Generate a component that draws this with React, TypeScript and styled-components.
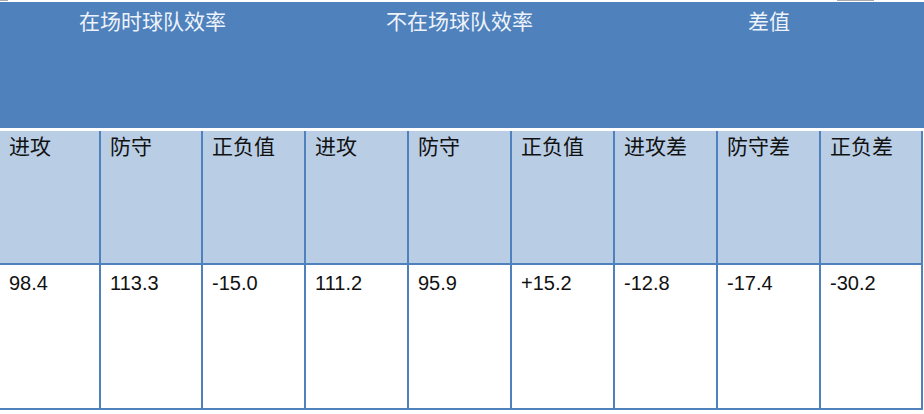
import React from 'react';
import styled, { createGlobalStyle } from 'styled-components';

const GlobalStyle = createGlobalStyle`
  html, body {
    margin: 0;
    padding: 0;
    background: #ffffff;
  }
  body {
    font-family: "Liberation Sans", Arial, sans-serif;
  }
`;

const Page = styled.div`
  width: 924px;
  height: 414px;
  overflow: hidden;
  background: #ffffff;
`;

const TopStrip = styled.div`
  height: 2px;
  display: flex;
  align-items: flex-start;
`;

const Mark = styled.span<{ $offset: number; $width: number }>`
  display: block;
  margin-left: ${(p) => p.$offset}px;
  width: ${(p) => p.$width}px;
  height: 1px;
  border-top: 1px solid #a9a9a9;
  box-sizing: border-box;
`;

const GroupRow = styled.div`
  display: grid;
  grid-template-columns: 305px 309px 1fr;
  height: 126px;
  background: #4f81bd;
`;

const GroupTitle = styled.div`
  padding-top: 6px;
  text-align: center;
  color: #eef3fa;
  font-family: "Noto Sans CJK SC", sans-serif;
  font-size: 21px;
  line-height: 1.2;
`;

const Table = styled.div`
  margin-top: 3px;
  width: 923px;
  display: grid;
  grid-template-columns: 99px 100px repeat(6, 101px) 100px;
  grid-template-rows: 132px 143px;
  column-gap: 2px;
  row-gap: 2px;
  padding: 0 2px 2px 0;
  box-sizing: border-box;
  background: #4f81bd;
`;

const HeadCell = styled.div`
  background: #b9cde5;
  padding: 2px 0 0 9px;
  color: #111111;
  font-family: "Noto Sans CJK SC", sans-serif;
  font-size: 21px;
  line-height: 1.2;
`;

const DataCell = styled.div`
  background: #ffffff;
  padding: 7px 0 0 9px;
  color: #111111;
  font-family: "Liberation Sans", Arial, sans-serif;
  font-size: 20px;
  line-height: 1.15;
`;

const groups = ['在场时球队效率', '不在场球队效率', '差值'];
const columns = ['进攻', '防守', '正负值', '进攻', '防守', '正负值', '进攻差', '防守差', '正负差'];
const values = ['98.4', '113.3', '-15.0', '111.2', '95.9', '+15.2', '-12.8', '-17.4', '-30.2'];

export default function App() {
  return (
    <Page>
      <GlobalStyle />
      <TopStrip>
        <Mark $offset={0} $width={8} />
        <Mark $offset={829} $width={37} />
      </TopStrip>
      <GroupRow>
        {groups.map((g) => (
          <GroupTitle key={g}>{g}</GroupTitle>
        ))}
      </GroupRow>
      <Table>
        {columns.map((c, i) => (
          <HeadCell key={'h' + i}>{c}</HeadCell>
        ))}
        {values.map((v, i) => (
          <DataCell key={'d' + i}>{v}</DataCell>
        ))}
      </Table>
    </Page>
  );
}
